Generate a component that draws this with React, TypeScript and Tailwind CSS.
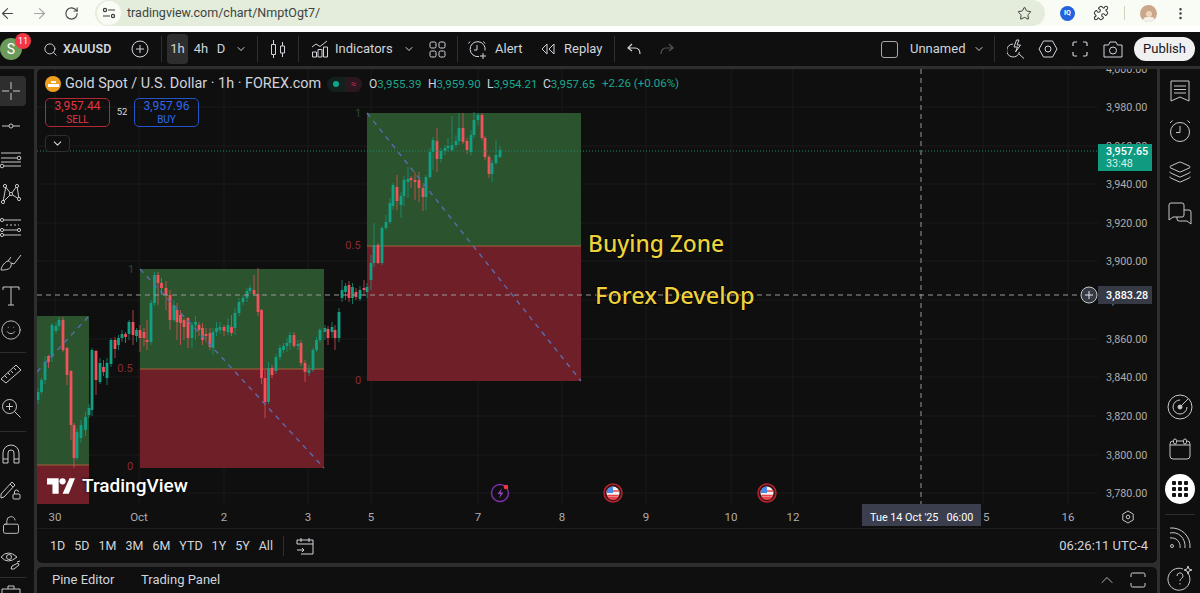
import type { ReactNode } from 'react';
import {
  ArrowLeft, ArrowRight, RotateCw, Star, Puzzle, MoreVertical, Search, ChevronDown, ChevronUp,
  Smile, LockOpen, Layers,
} from 'lucide-react';

// x, open, close, high, low, all in page pixels
const candles: number[][] = [
  [38,400,392,388,404],[41.5,392,380,378,394],[45,380,362,356,384],[48.5,356,362,355,368],
  [52,357,325,323,362],[56,331,326,322,334],[59,326,320,317,330],[63,320,350,317,352],
  [67,348,375,347,385],[71,371,425,370,440],[74,425,458,423,468],[77,458,432,428,460],
  [81,438,425,420,443],[85.5,430,417,412,436],[89,415,408,404,418],[92,410,350,348,416],
  [96,351,380,350,395],[100,382,363,358,384],[103.5,367,372,360,376],[107,378,363,358,385],
  [111,364,340,338,367],[115,340,349,337,358],[118.5,345,338,335,350],[122,338,334,330,342],
  [125.5,334,337,332,343],[129,334,322,320,340],[133,322,335,310,345],[136.5,336,330,328,342],
  [140,330,338,325,352],[144,332,338,328,346],[147,340,342,320,350],[151,342,303,300,345],
  [154.5,303,275,272,306],[158,275,283,272,305],[161.5,283,288,278,295],[166,288,295,281,310],
  [170,295,320,290,330],[174,320,305,300,322],[177,310,322,303,340],[180.5,315,323,310,345],
  [184,320,327,318,340],[188,318,338,317,348],[192,338,325,322,348],[195.5,325,322,316,340],
  [199,325,330,322,336],[202.5,328,340,323,345],[206,334,336,328,342],[210,333,347,328,350],
  [213,348,332,328,355],[216.5,332,328,322,336],[220,330,327,322,334],[224,327,331,325,336],
  [228,332,325,318,335],[231.5,327,333,315,336],[235,328,313,308,335],[239,313,302,298,316],
  [243,302,298,295,305],[247,298,291,288,302],[250,291,288,285,294],[254,290,294,275,296],
  [258,294,312,268,316],[261.5,310,378,309,384],[265,378,402,370,418],[268.5,402,368,362,404],
  [272,368,375,365,378],[276,371,357,354,374],[280,357,348,345,360],[283.5,350,346,343,353],
  [287,346,343,338,352],[290,343,335,332,350],[294,335,346,332,348],[298,346,344,340,350],
  [301,343,363,340,366],[305,363,372,360,382],[309,373,370,365,376],[313,370,350,348,372],
  [316.5,350,340,337,352],[320,340,330,328,342],[325,332,328,325,340],[328,329,338,326,345],
  [332,332,327,322,338],[335,330,338,325,350],[339,338,312,308,342],[342,298,290,280,302],
  [345.5,292,286,283,300],[349,285,298,281,302],[352.5,298,287,283,304],[356,292,297,288,300],
  [360,299,290,286,301],[364,288,290,280,296],[367,292,287,283,298],[371,280,263,255,290],
  [374,263,245,223,267],[378,245,263,243,264],[382,263,228,226,265],[386,228,222,215,230],
  [390,222,203,198,224],[393,206,185,183,210],[397,187,201,175,210],[401,205,196,192,218],
  [404,196,180,176,206],[408,182,179,167,198],[411,178,180,176,188],[415,180,182,172,200],
  [419,180,188,172,202],[423,188,197,185,211],[426,197,177,175,210],[430,177,152,148,179],
  [433,152,140,137,170],[437,141,159,128,172],[441,159,151,148,163],[445,151,148,145,155],
  [448,148,146,138,152],[452,150,145,116,152],[456,145,141,135,148],[459,141,128,113,145],
  [463,128,142,113,144],[467,141,150,138,154],[471,152,135,130,155],[474,135,120,112,138],
  [478,120,115,113,125],[482,115,138,113,140],[485,138,157,136,160],[489,157,174,155,178],
  [492,174,163,160,182],[496,163,155,140,165],[500,157,150,146,158],
];

const prices = [
  ['4,000.00', 73], ['3,980.00', 111], ['3,960.00', 150], ['3,940.00', 188], ['3,920.00', 227],
  ['3,900.00', 265], ['3,880.00', 304], ['3,860.00', 343], ['3,840.00', 381], ['3,820.00', 420],
  ['3,800.00', 459], ['3,780.00', 497],
] as const;

const ticks = [
  ['30', 55], ['Oct', 139], ['2', 224], ['3', 308], ['5', 371], ['7', 478], ['8', 562],
  ['9', 646], ['10', 731], ['12', 793], ['15', 983], ['16', 1068],
] as const;

const zones = [
  { x: 37, w: 52, top: 316, mid: 465, bottom: 504, line: [37, 372, 89, 316] },
  { x: 140, w: 184, top: 269, mid: 369, bottom: 468, line: [140, 269, 324, 468] },
  { x: 367, w: 214, top: 113, mid: 246, bottom: 381, line: [367, 113, 581, 381] },
];

const Sep = ({ className }: { className: string }) => <div className={`w-px h-[26px] bg-[#2e2e2e] shrink-0 ${className}`} />;

const UsFlag = ({ cx }: { cx: number }) => (
  <g>
    <circle cx={cx} cy={493} r={9} fill="#3a1114" stroke="#b3262f" strokeWidth="1.5" />
    <circle cx={cx} cy={493} r={6.5} fill="#f3f3f3" />
    <path d={`M${cx - 6.4} 491h12.8M${cx - 5.8} 495.5h11.6`} stroke="#e8434b" strokeWidth="1.6" />
    <path d={`M${cx - 5.8} 496.5a6.5 6.5 0 0 0 11.6 0z`} fill="#e8434b" />
    <path d={`M${cx} 486.5a6.5 6.5 0 0 0-6.5 6.5h6.5z`} fill="#4a8ae8" />
  </g>
);

const ChartCanvas = () => (
  <svg viewBox="37 69 1120 460" width="1120" height="460" className="block" fontSize="12">
    <rect x="37" y="69" width="1120" height="460" fill="#0f0f0f" />
    {/* grid */}
    {ticks.map(([, x]) => (
      <line key={x} x1={x} x2={x} y1="69" y2="505" stroke="#1b1b1b" />
    ))}
    {prices.map(([, y]) => (
      <line key={y} x1="37" x2="1098" y1={y - 4} y2={y - 4} stroke="#1b1b1b" />
    ))}

    {/* fib zones */}
    {zones.map((z) => (
      <g key={z.x}>
        <rect x={z.x} y={z.top} width={z.w} height={z.mid - z.top} fill="#2b532d" />
        <rect x={z.x} y={z.mid} width={z.w} height={z.bottom - z.mid} fill="#6f1f27" />
        <line x1={z.x} x2={z.x + z.w} y1={z.mid} y2={z.mid} stroke="#a5613a" />
      </g>
    ))}
    <g fill="#8a2a32" fontSize="11" textAnchor="middle">
      <text x="358" y="117" fill="#2f4a30">1</text>
      <text x="353" y="249">0.5</text>
      <text x="358" y="384">0</text>
      <text x="131" y="273" fill="#2f4a30">1</text>
      <text x="125" y="372">0.5</text>
      <text x="130" y="470">0</text>
    </g>

    {/* candles */}
    {candles.map(([x, o, c, h, l]) => {
      const color = c < o ? '#12a085' : '#f2525b';
      return (
        <g key={x}>
          <line x1={x} x2={x} y1={h} y2={l} stroke={color} strokeOpacity="0.7" />
          <rect x={x - 1.4} y={Math.min(o, c)} width="2.8" height={Math.max(Math.abs(c - o), 1)} fill={color} />
        </g>
      );
    })}

    {zones.map((z) => (
      <line key={z.x} x1={z.line[0]} y1={z.line[1]} x2={z.line[2]} y2={z.line[3]} stroke="#5a6bb0" strokeWidth="1.4" strokeDasharray="5 5" />
    ))}

    {/* crosshair and last price */}
    <line x1="37" x2="1098" y1="151" y2="151" stroke="#1f8a75" strokeDasharray="1 2" />
    <line x1="37" x2="1098" y1="295" y2="295" stroke="#9a9a9a" strokeDasharray="5 4" />
    <line x1="921" x2="921" y1="69" y2="505" stroke="#9a9a9a" strokeDasharray="5 4" />

    {/* drawn captions */}
    <g fill="#ecd23c" fontWeight="500" stroke="#000" strokeWidth="1.5" paintOrder="stroke" className="font-['Noto_Sans',sans-serif]">
      <text x="588" y="252" fontSize="22.8">Buying Zone</text>
      <text x="595" y="304" fontSize="23.5">Forex Develop</text>
    </g>

    {/* price scale */}
    <g fill="#adadad" fontSize="10.8">
      {prices.map(([p, y]) => (
        <text key={p} x="1106" y={y}>{p}</text>
      ))}
    </g>
    <rect x="1098" y="144" width="54" height="27" fill="#0f9b80" />
    <text x="1106" y="155" fill="#fff" fontSize="10.8" fontWeight="500">3,957.65</text>
    <text x="1106" y="167" fill="#d5f0ea" fontSize="10.8">33:48</text>
    <circle cx="1089" cy="295" r="8" fill="#363a45" stroke="#c8c8c8" />
    <path d="M1085 295h8M1089 291v8" stroke="#e6e6e6" />
    <rect x="1098" y="286" width="54" height="18" fill="#363a45" />
    <text x="1106" y="299" fill="#fff" fontSize="10.8" fontWeight="500">3,883.28</text>

    {/* time scale */}
    <line x1="37" x2="1157" y1="529" y2="529" stroke="#2e2e2e" />
    <g fill="#adadad" fontSize="11.5" textAnchor="middle">
      {ticks.map(([t, x]) => (
        <text key={t} x={x} y="521">{t}</text>
      ))}
    </g>
    <rect x="862" y="504" width="119" height="22" fill="#3a3e4d" />
    <text x="870" y="521" fill="#fff" fontSize="10.8" xmlSpace="preserve">Tue 14 Oct '25   06:00</text>
    <path d="M1128 511l5.2 3v6l-5.2 3-5.2-3v-6z" fill="none" stroke="#c4c4c4" />
    <circle cx="1128" cy="517" r="1.8" fill="none" stroke="#c4c4c4" />

    {/* event markers */}
    <circle cx="500" cy="493" r="8.5" fill="#0f0f0f" stroke="#7b2fa8" strokeWidth="1.5" />
    <path d="M502 488l-4.5 6h3l-1.5 4.5 4.5-6h-3z" fill="#9c3fd0" />
    <circle cx="506" cy="487" r="2.3" fill="#f23645" />
    <UsFlag cx={613} />
    <UsFlag cx={767} />
  </svg>
);

const Legend = () => (
  <div className="absolute left-[8px] top-[7px] flex flex-col items-start">
    <div className="flex items-center h-[16px]">
      <span className="relative w-[16px] h-[16px] rounded-full bg-[#efa01f] flex flex-col items-center justify-center gap-px shrink-0">
        <span className="w-[5px] h-[2px] bg-white" />
        <span className="w-[11px] h-[3px] bg-white" />
      </span>
      <span className="ml-[4px] text-[14.4px] text-[#d1d4dc] whitespace-nowrap w-[258px]">Gold Spot / U.S. Dollar · 1h · FOREX.com</span>
      <span className="ml-[4px] w-[35px] h-[15px] rounded-full bg-[#12211e] flex items-center overflow-hidden shrink-0">
        <span className="w-[18px] flex justify-center"><span className="w-[6px] h-[6px] rounded-full bg-[#10a58a]" /></span>
        <span className="flex-1 h-full bg-[#2c1620] text-[10px] leading-[14px] text-[#c2304a] text-center">≈</span>
      </span>
      <span className="ml-[7px] text-[11.5px] text-[#1aa88e] whitespace-nowrap flex">
        <span className="w-[59px]"><b className="font-normal text-[#d1d4dc] text-[12px]">O</b>3,955.39</span>
        <span className="w-[59px]"><b className="font-normal text-[#d1d4dc] text-[12px]">H</b>3,959.90</span>
        <span className="w-[56px]"><b className="font-normal text-[#d1d4dc] text-[12px]">L</b>3,954.21</span>
        <span className="w-[59px]"><b className="font-normal text-[#d1d4dc] text-[12px]">C</b>3,957.65</span>
        <span>+2.26 (+0.06%)</span>
      </span>
    </div>
    <div className="flex items-center mt-[6px]">
      <div className="w-[65px] h-[29px] rounded-[5px] border border-[#b22833] flex flex-col items-center justify-center text-[#e8343f] leading-[13px]">
        <span className="text-[12px]">3,957.44</span>
        <span className="text-[10px]">SELL</span>
      </div>
      <span className="w-[24px] text-center text-[9.5px] text-[#d8d8d8]">52</span>
      <div className="w-[65px] h-[29px] rounded-[5px] border border-[#2553c9] flex flex-col items-center justify-center text-[#2e68f0] leading-[13px]">
        <span className="text-[12px]">3,957.96</span>
        <span className="text-[10px]">BUY</span>
      </div>
    </div>
    <button className="mt-[8px] w-[25px] h-[17px] rounded-[4px] border border-[#2e2e2e] bg-[#0f0f0f] flex items-center justify-center text-[#d1d4dc]">
      <ChevronDown size={13} />
    </button>
  </div>
);

const BrowserBar = () => (
  <div className="h-[32px] bg-white shrink-0">
    <div className="h-[26px] bg-[#f9fcf4] flex items-center">
      <ArrowLeft size={17} strokeWidth={1.6} className="ml-[-1px] text-[#474747]" />
      <ArrowRight size={17} strokeWidth={1.6} className="ml-[15px] text-[#a3a3a3]" />
      <RotateCw size={15} strokeWidth={1.8} className="ml-[16px] text-[#474747]" />
      <div className="ml-[16px] w-[950px] h-[26px] bg-[#e4ecdc] rounded-[13px] flex items-center relative">
        <div className="ml-[2px] w-[24px] h-[24px] rounded-full bg-[#f9fcf4] flex items-center justify-center">
          <svg width="14" height="12" viewBox="0 0 14 12" fill="none" stroke="#3c3c3c" strokeWidth="1.2">
            <circle cx="3" cy="3" r="1.6" />
            <path d="M6 3h7M1 9h7" />
            <circle cx="11" cy="9" r="1.6" />
          </svg>
        </div>
        <span className="ml-[6px] text-[12.5px] text-[#3d443c]">tradingview.com/chart/NmptOgt7/</span>
        <Star size={15} strokeWidth={1.6} className="absolute right-[13px] text-[#3c3c3c]" />
      </div>
      <div className="ml-[15px] w-[15px] h-[15px] rounded-full bg-[#2463e0] flex items-center justify-center text-[7px] font-bold text-white">IQ</div>
      <Puzzle size={16} strokeWidth={1.6} className="ml-[18px] text-[#3c3c3c]" />
      <div className="ml-[15px] w-px h-[14px] bg-[#c8d8bc]" />
      <div className="ml-[15px] w-[17px] h-[17px] rounded-full bg-[#c9a78a] overflow-hidden flex flex-col items-center justify-end">
        <span className="w-[6px] h-[6px] rounded-full bg-[#f0d5bd]" />
        <span className="w-[12px] h-[5px] rounded-t bg-[#f4f1ec]" />
      </div>
      <MoreVertical size={15} className="ml-[16px] text-[#3c3c3c]" />
    </div>
  </div>
);

const TopToolbar = () => (
  <div className="h-[34px] bg-[#0f0f0f] flex items-center shrink-0 text-[#d1d4dc] text-[13px]">
    <div className="relative w-[22px] h-[22px] rounded-full bg-[#6c9a5a] flex items-center justify-center text-white text-[14px] shrink-0">
      S
      <span className="absolute left-[15px] top-[-5px] w-[16px] h-[16px] rounded-full bg-[#f23645] text-[9px] leading-[16px] text-center">11</span>
    </div>
    <Search size={15} strokeWidth={1.5} className="ml-[21px]" />
    <span className="ml-[5px] text-[12.5px] font-semibold w-[49px]">XAUUSD</span>
    <svg width="18" height="18" viewBox="0 0 18 18" fill="none" stroke="currentColor" className="ml-[19px] shrink-0">
      <circle cx="9" cy="9" r="8" />
      <path d="M5 9h8M9 5v8" />
    </svg>
    <Sep className="ml-[12px]" />
    <div className="ml-[5px] w-[21px] h-[30px] bg-[#2e2e2e] rounded-[4px] flex items-center justify-center">1h</div>
    <span className="w-[26px] text-center">4h</span>
    <span className="w-[14px] text-center">D</span>
    <ChevronDown size={12} className="ml-[7px]" />
    <Sep className="ml-[10px]" />
    <svg width="16" height="20" viewBox="0 0 16 20" fill="none" stroke="currentColor" className="ml-[12px] shrink-0">
      <path d="M1.5 5.5h4v10h-4zM3.5 1v4.5M3.5 15.5V19M10.5 7h4v7h-4zM12.5 3v4M12.5 14v4" />
    </svg>
    <Sep className="ml-[12px]" />
    <svg width="18" height="18" viewBox="0 0 18 18" fill="none" stroke="currentColor" className="ml-[12px] shrink-0">
      <path d="M1 7l4-3 4 2.5L16 1M1.500 17v-5h4v5zM7 17V9.500h4V17zM12.500 17V7h4v10z" />
    </svg>
    <span className="ml-[6px] w-[55px]">Indicators</span>
    <ChevronDown size={12} className="ml-[13px]" />
    <svg width="17" height="17" viewBox="0 0 17 17" fill="none" stroke="currentColor" className="ml-[14px] shrink-0">
      <rect x="1" y="1" width="6" height="6" rx="1.500" />
      <rect x="10" y="1" width="6" height="6" rx="1.500" />
      <rect x="1" y="10" width="6" height="6" rx="1.500" />
      <rect x="10" y="10" width="6" height="6" rx="1.500" />
    </svg>
    <Sep className="ml-[11px]" />
    <svg width="20" height="20" viewBox="0 0 20 20" fill="none" stroke="currentColor" className="ml-[10px] shrink-0">
      <path d="M11 17.500a7.500 7.500 0 1 1 6-6M9 6v5H6M2 2.500L0.500 4.500M15.500 2.500L17 4.500M15 14v6M12 17h6" />
    </svg>
    <span className="ml-[7px] w-[27px]">Alert</span>
    <svg width="14" height="14" viewBox="0 0 14 14" fill="none" stroke="currentColor" className="ml-[19px] shrink-0">
      <path d="M6 2L1 7l5 5zM13 2L8 7l5 5z" />
    </svg>
    <span className="ml-[9px] w-[37px]">Replay</span>
    <Sep className="ml-[13px]" />
    <svg width="14" height="12" viewBox="0 0 14 12" fill="none" stroke="currentColor" strokeWidth="1.2" className="ml-[12px] shrink-0">
      <path d="M5 1L1 5l4 3M1 5h7c3 0 5 2 5 6" />
    </svg>
    <svg width="14" height="12" viewBox="0 0 14 12" fill="none" stroke="#555" strokeWidth="1.2" className="ml-[19px] shrink-0">
      <path d="M9 1l4 4-4 3M13 5H6c-3 0-5 2-5 6" />
    </svg>

    <div className="ml-auto flex items-center">
      <div className="w-[17px] h-[17px] rounded-[3px] border border-[#a8a8a8]" />
      <span className="ml-[12px] w-[54px]">Unnamed</span>
      <ChevronDown size={12} className="ml-[9px]" />
      <Sep className="ml-[9px]" />
      <svg width="18" height="20" viewBox="0 0 18 20" fill="none" stroke="currentColor" className="ml-[12px] shrink-0">
        <path d="M6 5a6.500 6.500 0 1 0 6.500 8M12 15l5 4.500M9.500 1L7 8h3.500l-2 5 5-7H10l2-5z" />
      </svg>
      <svg width="20" height="18" viewBox="0 0 20 18" fill="none" stroke="currentColor" className="ml-[13px] shrink-0">
        <path d="M5.500 1h9l4.500 8-4.500 8h-9L1 9z" />
        <circle cx="10" cy="9" r="3" />
      </svg>
      <svg width="16" height="16" viewBox="0 0 16 16" fill="none" stroke="currentColor" strokeWidth="1.2" className="ml-[14px] shrink-0">
        <path d="M1 5V2.500Q1 1 2.500 1H5M11 1h2.500Q15 1 15 2.500V5M15 11v2.500Q15 15 13.500 15H11M5 15H2.500Q1 15 1 13.500V11" />
      </svg>
      <svg width="20" height="17" viewBox="0 0 20 17" fill="none" stroke="currentColor" className="ml-[15px] shrink-0">
        <path d="M1 4h4.500l1.500-3h6l1.500 3H19v12H1z" />
        <circle cx="10" cy="9.500" r="3.500" />
      </svg>
      <button className="ml-[11px] mr-[5px] w-[61px] h-[24px] rounded-full bg-[#f0f0f0] text-[#131722] text-[13px]">Publish</button>
    </div>
  </div>
);

const RailBtn = ({ children, className = '' }: { children: ReactNode; className?: string }) => (
  <div className={`w-full h-[34px] pr-[4px] flex items-center justify-center shrink-0 ${className}`}>{children}</div>
);

const LeftRail = () => (
  <div className="w-[34px] bg-[#0f0f0f] shrink-0 pt-[7px] flex flex-col text-[#c8c8c8] overflow-hidden">
    <div className="w-[26px]">
      <div className="h-[30px] pr-[4px] mb-[3px] bg-[#2e2e2e] rounded-r-[4px] flex items-center justify-center">
        <svg width="20" height="20" viewBox="0 0 20 20" stroke="currentColor" fill="none">
          <path d="M10 1v7M10 12v7M1 10h7M12 10h7" />
        </svg>
      </div>
      <RailBtn>
        <svg width="20" height="8" viewBox="0 0 20 8" stroke="currentColor" fill="none">
          <path d="M1 4h7M12 4h7" /><circle cx="10" cy="4" r="2" />
        </svg>
      </RailBtn>
      <RailBtn>
        <svg width="22" height="18" viewBox="0 0 22 18" stroke="currentColor" fill="none">
          <path d="M1 2h20M1 7h17M4 15h17M1 11h20" /><circle cx="19" cy="7" r="1.800" fill="#0f0f0f" /><circle cx="2" cy="15" r="1.800" fill="#0f0f0f" />
        </svg>
      </RailBtn>
      <RailBtn>
        <svg width="22" height="22" viewBox="0 0 22 22" stroke="currentColor" fill="none">
          <path d="M5 3l6 8 6-8M3 19l3-16M11 11l-8 8M11 11l8 5M17 3l2 13" />
          <circle cx="5" cy="3" r="1.600" fill="#0f0f0f" /><circle cx="17" cy="3" r="1.600" fill="#0f0f0f" />
          <circle cx="3" cy="19" r="1.600" fill="#0f0f0f" /><circle cx="19" cy="16" r="1.600" fill="#0f0f0f" /><circle cx="11" cy="11" r="1.600" fill="#0f0f0f" />
        </svg>
      </RailBtn>
      <RailBtn>
        <svg width="22" height="20" viewBox="0 0 22 20" stroke="currentColor" fill="none">
          <path d="M3 2h18M4 12h14M4 17h17" /><path d="M6 7h13" strokeDasharray="2 2" />
          <circle cx="2" cy="2" r="1.600" fill="#0f0f0f" /><circle cx="2" cy="12" r="1.600" fill="#0f0f0f" />
          <circle cx="2" cy="17" r="1.600" fill="#0f0f0f" /><circle cx="19" cy="12" r="1.600" fill="#0f0f0f" />
        </svg>
      </RailBtn>
      <RailBtn>
        <svg width="22" height="20" viewBox="0 0 22 20" stroke="currentColor" fill="none">
          <path d="M1 18c3 0 9 0 10-4 1-3-1-5-3-5-3 1-6 4-7 9zM11 11l3 1 7-9M8 9l3-4" />
        </svg>
      </RailBtn>
      <RailBtn>
        <svg width="20" height="22" viewBox="0 0 20 22" stroke="currentColor" fill="none">
          <path d="M2 5V2h16v3M10 2v18M7 20h6" />
        </svg>
      </RailBtn>
      <RailBtn><Smile size={22} strokeWidth={1} /></RailBtn>
    </div>
    <div className="w-[26px] h-px bg-[#2e2e2e] mt-[5px] mb-[4px] shrink-0" />
    <div className="w-[26px]">
      <RailBtn>
        <svg width="22" height="22" viewBox="0 0 22 22" stroke="currentColor" fill="none">
          <path d="M1 16L16 2l5 5L6 20zM5 13l2 2M8 10l2 2M11 8l2 2M14 5l2 2" />
        </svg>
      </RailBtn>
      <RailBtn>
        <svg width="20" height="20" viewBox="0 0 20 20" stroke="currentColor" fill="none">
          <circle cx="8.500" cy="8.500" r="7" /><path d="M13.500 13.500l6 6M5 8.500h7M8.500 5v7" />
        </svg>
      </RailBtn>
    </div>
    <div className="w-[26px] h-px bg-[#2e2e2e] mt-[6px] mb-[5px] shrink-0" />
    <div className="w-[26px]">
      <RailBtn>
        <svg width="18" height="20" viewBox="0 0 18 20" stroke="currentColor" fill="none">
          <path d="M1 19V9a8 8 0 0 1 16 0v10h-5V9a3 3 0 0 0-6 0v10zM1 15h5M12 15h5" />
        </svg>
      </RailBtn>
      <RailBtn className="mt-[2px]">
        <svg width="22" height="22" viewBox="0 0 22 22" stroke="currentColor" fill="none">
          <path d="M1 15L12 3l3 3L4 18l-3 1zM10 5l3 3" />
          <rect x="13" y="15" width="7" height="5" rx="1" /><path d="M14.500 15v-2a2 2 0 0 1 4 0" />
        </svg>
      </RailBtn>
      <RailBtn className="mt-[1px]"><LockOpen size={20} strokeWidth={1.1} /></RailBtn>
      <RailBtn className="mt-[1px]">
        <svg width="22" height="22" viewBox="0 0 22 22" stroke="currentColor" fill="none">
          <path d="M1 8q7-8 16 0-9 8-16 0z" /><circle cx="9" cy="8" r="2.500" />
          <path d="M11 20l1-3 6-3 1 2-5 4zM17 13l3-1" />
        </svg>
      </RailBtn>
    </div>
    <div className="w-[26px] h-px bg-[#2e2e2e] shrink-0" />
    <div className="w-[22px] mt-[6px] flex justify-center">
      <svg width="20" height="18" viewBox="0 0 20 18" stroke="currentColor" fill="none">
        <path d="M1 5h18v12H1zM7 5V2h6v3" />
      </svg>
    </div>
  </div>
);

const RightRail = () => (
  <div className="w-[40px] bg-[#0f0f0f] shrink-0 flex flex-col items-center text-[#c8c8c8] pt-[2px]">
    <div className="h-[40px] flex items-center justify-center">
      <svg width="20" height="22" viewBox="0 0 20 22" fill="none" stroke="currentColor">
        <path d="M1 1h18v20l-9-4-9 4zM4 6h12M4 9.500h12M4 13h12" />
      </svg>
    </div>
    <div className="h-[40px] flex items-center justify-center">
      <svg width="24" height="24" viewBox="0 0 24 24" fill="none" stroke="currentColor">
        <circle cx="12" cy="13" r="9.500" /><path d="M12 7v6.500H8M2 4L4.500 1.500M22 4l-2.500-2.500" />
      </svg>
    </div>
    <div className="h-[42px] flex items-center justify-center"><Layers size={24} strokeWidth={1} /></div>
    <div className="h-[41px] flex items-center justify-center">
      <svg width="24" height="24" viewBox="0 0 24 24" fill="none" stroke="currentColor">
        <path d="M1 3q0-2 2-2h11q2 0 2 2v10q0 2-2 2H5l-4 3zM16 8h5q2 0 2 2v8l0 4-4-3h-8q-2 0-2-2v-2" />
      </svg>
    </div>
    <div className="flex-1" />
    <div className="h-[42px] flex items-center justify-center">
      <svg width="26" height="26" viewBox="0 0 26 26" fill="none" stroke="currentColor">
        <circle cx="13" cy="13" r="12" /><path d="M13 6a7 7 0 1 0 7 7" /><circle cx="13" cy="13" r="2" fill="currentColor" /><path d="M13 13L21 5" />
      </svg>
    </div>
    <div className="h-[41px] mb-[4px] flex items-center justify-center">
      <svg width="22" height="22" viewBox="0 0 22 22" fill="none" stroke="currentColor">
        <rect x="1" y="3" width="20" height="18" rx="3" /><path d="M1 7h20" /><rect x="4.500" y="1" width="3" height="5" rx="1.500" fill="#0f0f0f" /><rect x="14.500" y="1" width="3" height="5" rx="1.500" fill="#0f0f0f" />
      </svg>
    </div>
    <div className="w-[30px] h-[30px] rounded-full bg-white grid grid-cols-3 gap-[2px] p-[7px] shrink-0 my-[1px]">
      {Array.from({ length: 9 }).map((_, i) => (
        <span key={i} className="bg-[#131313] rounded-[1px]" />
      ))}
    </div>
    <div className="w-[30px] h-px bg-[#2e2e2e] mt-[9px] shrink-0" />
    <div className="h-[46px] flex items-center justify-center">
      <svg width="22" height="22" viewBox="0 0 22 22" fill="none" stroke="currentColor">
        <path d="M1 6c8-2 16 5 15 15M1 11c6-1 11 4 10 10M1 1c11-1 21 8 20 20" /><circle cx="3" cy="19" r="1.500" />
      </svg>
    </div>
    <div className="h-[32px] pt-[4px] flex items-start justify-center">
      <svg width="26" height="26" viewBox="0 0 26 26" fill="none" stroke="currentColor">
        <path d="M21 8a11 11 0 1 1-5-4" /><path d="M10 11a3 3 0 1 1 4.500 2.500c-1 .6-1.500 1.200-1.500 2.500M13 18v1.500" />
        <path d="M21 1l1 3 3 1-3 1-1 3-1-3-3-1 3-1z" />
      </svg>
    </div>
  </div>
);

export default function App() {
  const ranges = ['1D', '5D', '1M', '3M', '6M', 'YTD', '1Y', '5Y', 'All'];
  return (
    <div className="w-[1200px] h-[593px] overflow-hidden flex flex-col bg-[#2e2e2e] font-['Roboto',sans-serif]">
      <BrowserBar />
      <TopToolbar />
      <div className="flex-1 min-h-0 flex gap-[3px] mt-[3px]">
        <LeftRail />
        <div className="flex-1 min-w-0 flex flex-col">
          <div className="relative h-[460px] shrink-0 overflow-hidden rounded-tl-[5px]">
            <ChartCanvas />
            <Legend />
            <div className="absolute left-[10px] bottom-[34px] flex items-center gap-[7px] text-white [text-shadow:0_0_3px_#000]">
              <svg width="28" height="16" viewBox="0 0 36 20" fill="#fff">
                <path d="M15 20H7V8H0V0h15zM28 20h-8l9-20h7z" />
                <circle cx="20" cy="4" r="4" />
              </svg>
              <span className="text-[19px] font-medium leading-none">TradingView</span>
            </div>
          </div>
          <div className="h-[34px] bg-[#0f0f0f] rounded-b-[5px] flex items-center text-[12.5px] text-[#d1d4dc] shrink-0 pl-[13px]">
            <div className="w-[223px] flex justify-between">
              {ranges.map((r) => (
                <span key={r}>{r}</span>
              ))}
            </div>
            <div className="w-px h-[20px] bg-[#2e2e2e] ml-[10px]" />
            <svg width="18" height="18" viewBox="0 0 18 18" fill="none" stroke="currentColor" className="ml-[12px]">
              <path d="M1 7V3h16v14H5M1 7h16M5 1v4M13 1v4M1 13h7M6 11l2 2-2 2" />
            </svg>
            <span className="ml-auto mr-[9px] text-[13px]">06:26:11 UTC-4</span>
          </div>
          <div className="flex-1 mt-[4px] bg-[#0f0f0f] rounded-t-[5px] flex items-center text-[13px] text-[#d1d4dc] pl-[15px]">
            <span className="w-[60px] whitespace-nowrap">Pine Editor</span>
            <span className="ml-[29px]">Trading Panel</span>
            <ChevronUp size={20} strokeWidth={1} className="ml-auto" />
            <svg width="16" height="16" viewBox="0 0 16 16" fill="none" stroke="currentColor" className="ml-[13px] mr-[11px]">
              <path d="M1 5V2.500Q1 1 2.500 1h11Q15 1 15 2.500V5M15 11v2.500Q15 15 13.500 15h-11Q1 15 1 13.500V11" />
            </svg>
          </div>
        </div>
        <RightRail />
      </div>
    </div>
  );
}
